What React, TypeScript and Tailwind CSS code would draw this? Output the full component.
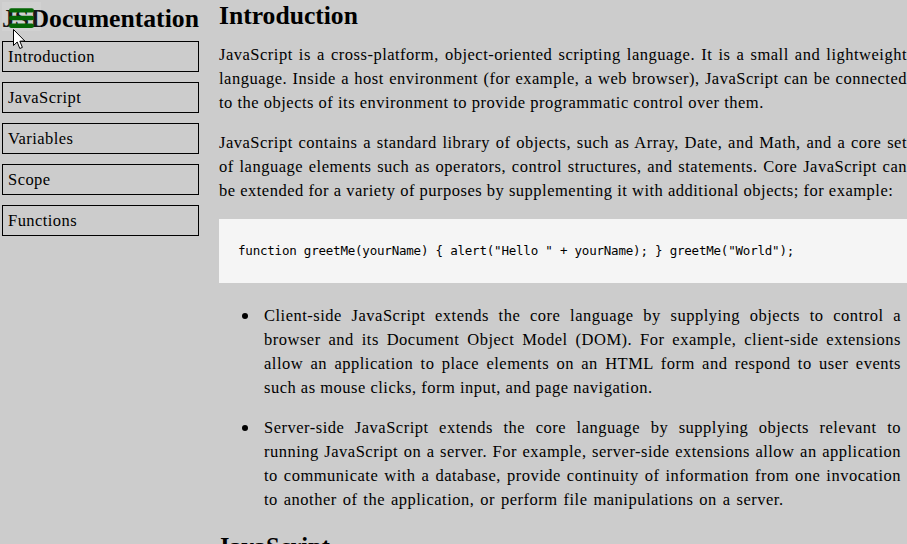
const serif = "font-['Liberation_Serif','DejaVu_Serif',serif]";

function Line({ text, last, lastClass }: { text: string; last?: boolean; lastClass?: string }) {
  return <div className={last ? `whitespace-nowrap ${lastClass ?? ""}` : "[text-align:justify] [text-align-last:justify] whitespace-nowrap"}>{text}</div>;
}

function Para({ lines, className = "", lastClass }: { lines: string[]; className?: string; lastClass?: string }) {
  return (
    <div className={`text-[16.5px] leading-6 tracking-[0.5px] ${className}`}>
      {lines.map((l, i) => (
        <Line key={i} text={l} last={i === lines.length - 1} lastClass={lastClass} />
      ))}
    </div>
  );
}

function Bullet({ children }: { children: React.ReactNode }) {
  return (
    <li className="flex">
      <span className="mt-[9px] ml-[23px] mr-[16px] h-[6px] w-[6px] shrink-0 rounded-full bg-black" />
      <div className="min-w-0 flex-1">{children}</div>
    </li>
  );
}

const nav = ["Introduction", "JavaScript", "Variables", "Scope", "Functions"];

export default function App() {
  return (
    <div className={`relative flex h-[544px] w-[907px] overflow-hidden bg-[#cccccc] text-black ${serif}`}>
      <aside className="flex w-[219px] shrink-0 flex-col">
        <h2 className="mt-[4px] h-[30px] whitespace-nowrap pl-[2px] text-[25.7px] font-bold leading-[30px] [word-spacing:-5px]">JS Documentation</h2>
        <nav className="mt-[7px] flex flex-col gap-[10px] pl-[2px]">
          {nav.map((n) => (
            <a key={n} className="block h-[31px] w-[197px] border border-black pl-[5px] text-[16.5px] leading-[30px] tracking-[0.45px]">{n}</a>
          ))}
        </nav>
      </aside>
      <main className="w-[688px] shrink-0">
        <h1 className="mt-[2px] h-[28px] text-[25.6px] font-bold leading-[28px]">Introduction</h1>
        <Para className="mt-[13px]" lines={[
          "JavaScript is a cross-platform, object-oriented scripting language. It is a small and lightweight",
          "language. Inside a host environment (for example, a web browser), JavaScript can be connected",
          "to the objects of its environment to provide programmatic control over them.",
        ]} />
        <Para className="mt-[16px]" lines={[
          "JavaScript contains a standard library of objects, such as Array, Date, and Math, and a core set",
          "of language elements such as operators, control structures, and statements. Core JavaScript can",
          "be extended for a variety of purposes by supplementing it with additional objects; for example:",
        ]} />
        <pre className="mt-[16px] flex h-[64px] w-[688px] items-center bg-[#f5f5f5] pl-[19px] font-['DejaVu_Sans_Mono',monospace] text-[12.5px] tracking-[-0.21px]">function greetMe(yourName) {"{"} alert("Hello " + yourName); {"}"} greetMe("World");</pre>
        <ul className="mt-[21px] flex w-[682px] flex-col gap-[16px]">
          <Bullet>
            <Para lines={[
              "Client-side JavaScript extends the core language by supplying objects to control a",
              "browser and its Document Object Model (DOM). For example, client-side extensions",
              "allow an application to place elements on an HTML form and respond to user events",
              "such as mouse clicks, form input, and page navigation.",
            ]} />
          </Bullet>
          <Bullet>
            <Para lastClass="[word-spacing:1.3px]" lines={[
              "Server-side JavaScript extends the core language by supplying objects relevant to",
              "running JavaScript on a server. For example, server-side extensions allow an application",
              "to communicate with a database, provide continuity of information from one invocation",
              "to another of the application, or perform file manipulations on a server.",
            ]} />
          </Bullet>
        </ul>
        <h1 className="mt-[21px] -ml-[2px] text-[24.5px] font-bold leading-[28px]">JavaScript</h1>
      </main>
      <div className="absolute left-[2px] top-[2px] h-[29px] w-[39px] bg-[#ffffff]/10" />
      <svg className="absolute left-[9px] top-[8px]" width="25" height="20" viewBox="0 0 25 20">
        <g stroke="#056605" strokeWidth="4.4" strokeLinecap="round">
          <line x1="2.2" y1="2.4" x2="22.8" y2="2.4" />
          <line x1="2.2" y1="10" x2="22.8" y2="10" />
          <line x1="2.2" y1="17.8" x2="22.8" y2="17.8" />
        </g>
      </svg>
      <svg className="absolute left-[13px] top-[29px]" width="13" height="21" viewBox="0 0 13 21">
        <path d="M0.5 0.5 L0.5 16.5 L4.2 13 L6.8 19.5 L9.4 18.4 L6.8 12.2 L11.8 12 Z" fill="#fff" stroke="#000" strokeWidth="1" />
      </svg>
    </div>
  );
}
